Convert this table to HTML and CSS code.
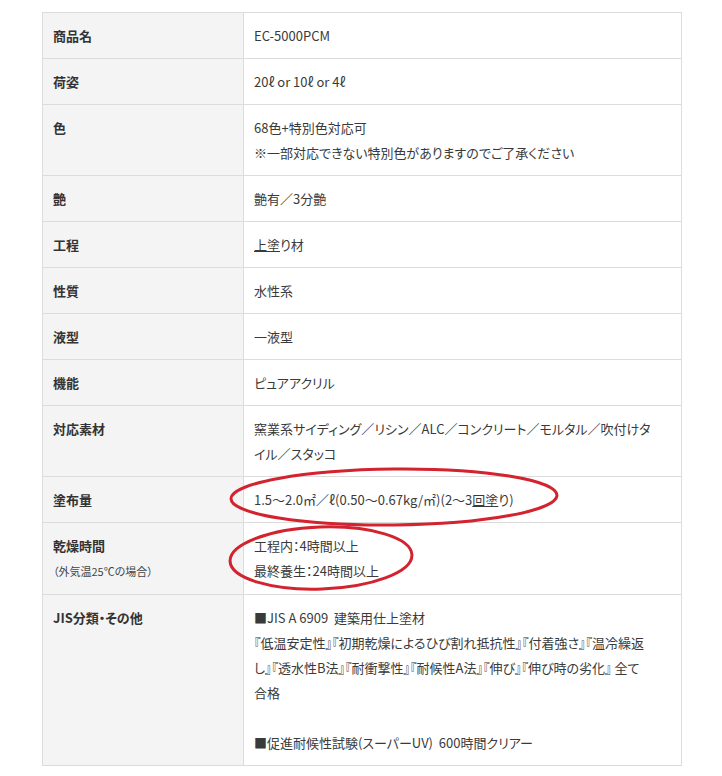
FILE: index.html
```html
<!DOCTYPE html>
<html lang="ja">
  <head>
    <meta charset="UTF-8" />
    <meta name="viewport" content="width=device-width, initial-scale=1.0" />
    <title>EC-5000PCM 製品仕様</title>
    <link rel="stylesheet" href="styles.css">
  </head>
  <body>
    <div class="spec-wrap">
      <table class="spec-table">
        <colgroup>
          <col class="spec-col-head" />
          <col />
        </colgroup>
        <tr>
          <th>商品名</th>
          <td>EC-5000PCM</td>
        </tr>
        <tr>
          <th>荷姿</th>
          <td>20ℓ or 10ℓ or 4ℓ</td>
        </tr>
        <tr>
          <th>色</th>
          <td>68色+特別色対応可<br />※一部対応できない特別色がありますのでご了承ください</td>
        </tr>
        <tr>
          <th>艶</th>
          <td>艶有／3分艶</td>
        </tr>
        <tr>
          <th>工程</th>
          <td><span class="term">上塗</span>り材</td>
        </tr>
        <tr>
          <th>性質</th>
          <td>水性系</td>
        </tr>
        <tr>
          <th>液型</th>
          <td>一液型</td>
        </tr>
        <tr>
          <th>機能</th>
          <td>ピュアアクリル</td>
        </tr>
        <tr>
          <th>対応素材</th>
          <td>窯業系サイディング／リシン／ALC／コンクリート／モルタル／吹付けタ<br />イル／スタッコ</td>
        </tr>
        <tr>
          <th>塗布量</th>
          <td>1.5～2.0㎡／ℓ(0.50～0.67kg/㎡)(2～3<span class="term">回塗</span>り)</td>
        </tr>
        <tr>
          <th>乾燥時間<br /><span class="spec-note">（外気温25℃の場合）</span></th>
          <td>工程内：4時間以上<br />最終養生：24時間以上</td>
        </tr>
        <tr>
          <th>JIS分類・その他</th>
          <td>
            ■JIS A 6909&nbsp; 建築用仕上塗材<br />
            『低温安定性』『初期乾燥によるひび割れ抵抗性』『付着強さ』『温冷繰返<br />
            し』『透水性B法』『耐衝撃性』『耐候性A法』『伸び』『伸び時の劣化』 全て<br />
            合格<br />
            <br />
            ■促進耐候性試験(スーパーUV)&nbsp; 600時間クリアー
          </td>
        </tr>
      </table>

      <!-- hand drawn marks over the table -->
      <svg class="spec-marks" width="722" height="776" viewBox="0 0 722 776">
        <ellipse cx="394" cy="497" rx="163" ry="28" transform="rotate(-0.6 394 497)" />
        <ellipse cx="321" cy="558" rx="91" ry="31" transform="rotate(-2 321 558)" />
      </svg>
    </div>
  </body>
</html>
```

FILE: styles.css
```css
body {
  margin: 0;
  background-color: #fff;
  font-family: "Noto Sans CJK JP", "Liberation Sans", sans-serif;
  font-size: 13px;
  color: #333;
}
.spec-wrap {
  position: relative;
  padding: 12px 0 12px 42px;
}
.spec-table {
  width: 640px;
  border-collapse: collapse;
  table-layout: fixed;
  font-size: 13px;
  line-height: 25px;
  font-feature-settings: "palt";
}
.spec-col-head {
  width: 201px;
}
.spec-table th,
.spec-table td {
  border: 1px solid #dcdcdc;
  padding: 10px 10px;
  vertical-align: top;
  text-align: left;
  white-space: nowrap;
}
.spec-table th {
  background-color: #f4f4f4;
  color: #333;
  font-weight: bold;
}
.spec-table td {
  background-color: #fff;
  color: #3a3a3a;
}
.spec-note {
  font-size: 11px;
  font-weight: normal;
  color: #444;
}
.term {
  text-decoration: underline;
}
.spec-marks {
  position: absolute;
  top: 0;
  left: 0;
  pointer-events: none;
}
.spec-marks ellipse {
  fill: none;
  stroke: #d3232f;
  stroke-width: 3;
}
```
